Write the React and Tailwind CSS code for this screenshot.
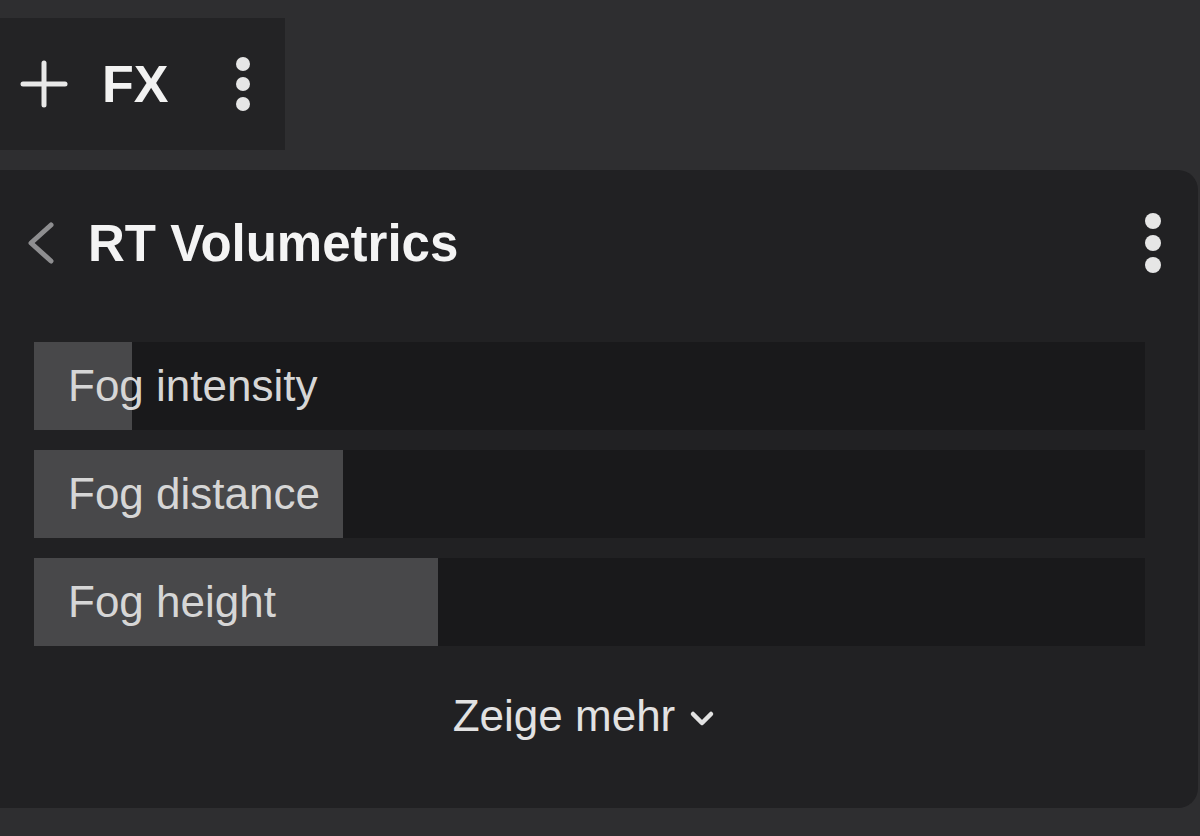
import React from 'react';

const sliders = [
    { label: 'Fog intensity', fill: 98 },
    { label: 'Fog distance', fill: 309 },
    { label: 'Fog height', fill: 404 },
];

function Kebab({ size = 14, gap = 7, color = '#e6e6e6' }) {
    return (
        <div className="flex flex-col items-center" style={{ gap }}>
            {[0, 1, 2].map((i) => (
                <span key={i} className="block rounded-full" style={{ width: size, height: size, background: color }} />
            ))}
        </div>
    );
}

export default function App() {
    return (
        <div className="w-[1200px] h-[836px] bg-[#2e2e30] pt-[18px] overflow-hidden" style={{ fontFamily: '"Liberation Sans", Arial, sans-serif' }}>
            <div className="w-[285px] h-[132px] bg-[#232325] flex items-center">
                <svg className="ml-[20px]" width="48" height="48" viewBox="0 0 48 48" fill="none" stroke="#e8e8e8" strokeWidth="5" strokeLinecap="round">
                    <line x1="24" y1="3" x2="24" y2="45" />
                    <line x1="3" y1="24" x2="45" y2="24" />
                </svg>
                <span className="ml-[34px] text-[52px] font-bold text-[#f2f2f2] leading-none">FX</span>
                <div className="ml-[68px]">
                    <Kebab size={14} gap={6} />
                </div>
            </div>

            <div className="mt-[20px] w-[1198px] h-[638px] rounded-r-[20px] bg-[#212123] pt-[40px]">
                <div className="h-[66px] flex items-center pl-[25px] pr-[37px]">
                    <svg width="32" height="42" viewBox="0 0 32 42" fill="none" stroke="#8e8e90" strokeWidth="5" strokeLinecap="round" strokeLinejoin="round">
                        <polyline points="26,3 6,21 26,39" />
                    </svg>
                    <span className="ml-[31px] text-[51px] font-bold text-[#f4f4f4] leading-none">RT Volumetrics</span>
                    <div className="ml-auto">
                        <Kebab size={16} gap={6} />
                    </div>
                </div>

                <div className="mt-[66px] ml-[34px] w-[1111px] flex flex-col gap-[20px]">
                    {sliders.map((s) => (
                        <div key={s.label} className="relative h-[88px] bg-[#19191b] flex items-center">
                            <div className="absolute left-0 top-0 h-full bg-[#48484a]" style={{ width: s.fill }} />
                            <span className="relative pl-[34px] text-[44px] text-[#d6d6d6] leading-none">{s.label}</span>
                        </div>
                    ))}
                </div>

                <div className="mt-[40px] h-[60px] flex items-center justify-center pr-[30px]">
                    <span className="text-[44px] text-[#e2e2e2] leading-none">Zeige mehr</span>
                    <svg className="ml-[14px] mt-[4px]" width="26" height="20" viewBox="0 0 26 20" fill="none" stroke="#e2e2e2" strokeWidth="4.5" strokeLinecap="round" strokeLinejoin="round">
                        <polyline points="4,6 13,15 22,6" />
                    </svg>
                </div>
            </div>
        </div>
    );
}
